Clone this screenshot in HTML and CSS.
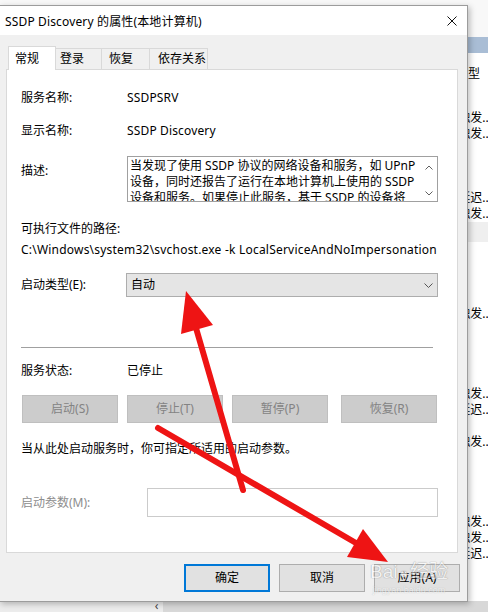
FILE: index.html
```html
<!DOCTYPE html>
<html lang="zh-CN">
<head>
    <meta charset="UTF-8">
    <meta name="viewport" content="width=device-width, initial-scale=1.0">
    <title>SSDP Discovery 的属性(本地计算机)</title>
    <link rel="stylesheet" href="styles.css">
</head>
<body>
    <div class="screen">
        <!-- services window behind the dialog -->
        <div class="desktop">
            <div class="bd-top"></div>
            <div class="bd-bar"></div>
            <div class="bd-head">启动类型</div>
            <div class="bd-list">
                <div class="bd-row">手动(触发...</div>
                <div class="bd-row">手动(触发...</div>
                <div class="bd-row"></div>
                <div class="bd-row"></div>
                <div class="bd-row"></div>
                <div class="bd-row">自动(延迟...</div>
                <div class="bd-row">手动(触发...</div>
                <div class="bd-row bd-band"></div>
                <div class="bd-row"></div>
                <div class="bd-row"></div>
                <div class="bd-row"></div>
                <div class="bd-row"></div>
                <div class="bd-row">手动(触发...</div>
                <div class="bd-row"></div>
                <div class="bd-row"></div>
                <div class="bd-row"></div>
                <div class="bd-row"></div>
                <div class="bd-row">手动(触发...</div>
                <div class="bd-row">自动(延迟...</div>
                <div class="bd-row"></div>
                <div class="bd-row">手动(触发...</div>
                <div class="bd-row"></div>
                <div class="bd-row"></div>
                <div class="bd-row"></div>
                <div class="bd-row"></div>
                <div class="bd-row">手动(触发...</div>
                <div class="bd-row">手动(触发...</div>
                <div class="bd-row">自动(延迟...</div>
            </div>
            <div class="bd-foot">
                <div class="bd-foot-left"></div>
                <div class="bd-foot-arrow">‹</div>
                <div class="bd-foot-track"></div>
            </div>
        </div>

        <div class="dialog">
            <div class="title-bar">
                <span class="title">SSDP Discovery 的属性(本地计算机)</span>
                <svg class="close" width="10" height="10" viewBox="0 0 10 10">
                    <path d="M0.5 0.5 L9.5 9.5 M9.5 0.5 L0.5 9.5" stroke="#111" stroke-width="1" fill="none"/>
                </svg>
            </div>

            <div class="dialog-body">
                <div class="tabs">
                    <div class="tab tab-active">常规</div>
                    <div class="tab tab-login">登录</div>
                    <div class="tab tab-recover">恢复</div>
                    <div class="tab tab-deps">依存关系</div>
                </div>

                <div class="tab-panel">
                    <div class="row">
                        <div class="label">服务名称:</div>
                        <div class="latin">SSDPSRV</div>
                    </div>
                    <div class="row row-gap">
                        <div class="label">显示名称:</div>
                        <div class="latin">SSDP Discovery</div>
                    </div>
                    <div class="row row-gap row-top">
                        <div class="label label-desc">描述:</div>
                        <div class="desc-box">
                            <div class="desc-text">
                                <div>当发现了使用 SSDP 协议的网络设备和服务，如 UPnP</div>
                                <div>设备，同时还报告了运行在本地计算机上使用的 SSDP</div>
                                <div>设备和服务。如果停止此服务，基于 SSDP 的设备将</div>
                            </div>
                            <div class="desc-scroll">
                                <svg width="8" height="5" viewBox="0 0 8 5"><path d="M0.5 4.5 L4 1 L7.5 4.5" stroke="#606060" fill="none"/></svg>
                                <svg width="8" height="5" viewBox="0 0 8 5"><path d="M0.5 0.5 L4 4 L7.5 0.5" stroke="#606060" fill="none"/></svg>
                            </div>
                        </div>
                    </div>

                    <div class="path-label">可执行文件的路径:</div>
                    <div class="path">C:\Windows\system32\svchost.exe -k LocalServiceAndNoImpersonation</div>

                    <div class="row startup-row">
                        <div class="label">启动类型(E):</div>
                        <div class="select">
                            <span>自动</span>
                            <svg width="9" height="5" viewBox="0 0 9 5"><path d="M0.5 0.5 L4.5 4.5 L8.5 0.5" stroke="#555" fill="none"/></svg>
                        </div>
                    </div>

                    <div class="separator"></div>

                    <div class="row status-row">
                        <div class="label">服务状态:</div>
                        <div>已停止</div>
                    </div>

                    <div class="service-buttons">
                        <button class="btn-disabled">启动(S)</button>
                        <button class="btn-disabled">停止(T)</button>
                        <button class="btn-disabled">暂停(P)</button>
                        <button class="btn-disabled btn-last">恢复(R)</button>
                    </div>

                    <div class="hint">当从此处启动服务时，你可指定所适用的启动参数。</div>

                    <div class="row param-row">
                        <div class="label label-param">启动参数(M):</div>
                        <div class="param-input"></div>
                    </div>
                </div>

                <div class="footer">
                    <button class="btn btn-default">确定</button>
                    <button class="btn">取消</button>
                    <button class="btn">应用(A)</button>
                </div>
            </div>
        </div>

        <!-- red annotation arrows drawn over the screenshot -->
        <svg class="annot" width="488" height="612" viewBox="0 0 488 612">
            <line x1="243" y1="490" x2="196" y2="328" stroke="#ee1414" stroke-width="6" stroke-linecap="round"/>
            <polygon points="186,291 213,325 181,334" fill="#ee1414"/>
            <line x1="158" y1="428" x2="356" y2="543" stroke="#ee1414" stroke-width="6" stroke-linecap="round"/>
            <polygon points="388,562 347,557 363,529" fill="#ee1414"/>
        </svg>

        <div class="watermark">
            <span class="wm-brand">Bai<span class="wm-paw">●</span>经验</span>
            <span class="wm-url">jingyan.baidu.com</span>
        </div>
    </div>
</body>
</html>
```

FILE: styles.css
```css
body {
    margin: 0;
    font-family: "Noto Sans", "Noto Sans CJK SC", sans-serif;
    font-size: 12px;
    line-height: 16px;
    color: #000;
    background-color: #fff;
}

.screen {
    position: relative;
    width: 488px;
    height: 612px;
    overflow: hidden;
}

/* background window */
.desktop {
    display: flex;
    flex-direction: column;
    height: 612px;
    background-color: #fff;
}

.bd-top {
    height: 37px;
    background-color: #f8f8f8;
}

.bd-bar {
    height: 16px;
    background-color: #a9bdd5;
}

.bd-head {
    margin-top: 13px;
    height: 16px;
    text-align: right;
    padding-right: 8px;
}

.bd-list {
    margin-top: 28px;
}

.bd-row {
    height: 16px;
    text-align: right;
    white-space: nowrap;
    margin-right: -4px;
}

.bd-band {
    height: 20px;
    background-color: #efefef;
}

.bd-foot {
    margin-top: auto;
    height: 11px;
    display: flex;
}

.bd-foot-left {
    width: 150px;
    background-color: #ececec;
}

.bd-foot-arrow {
    width: 13px;
    background-color: #ececec;
    color: #444;
    font-size: 12px;
    line-height: 10px;
    text-align: center;
}

.bd-foot-track {
    flex: 1;
    background-color: #d8d8d8;
}

/* dialog window */
.dialog {
    position: absolute;
    left: -1px;
    top: 5px;
    width: 469px;
    height: 597px;
    box-sizing: border-box;
    background-color: #f0f0f0;
    border: 1px solid #9c9c9c;
    box-shadow: 2px 2px 6px rgba(0, 0, 0, 0.25);
    display: flex;
    flex-direction: column;
}

.title-bar {
    height: 29px;
    background-color: #fff;
    display: flex;
    align-items: center;
    padding-left: 5px;
}

.title {
    flex: 1;
    padding-top: 3px;
    letter-spacing: 0.15px;
}

.close {
    margin-right: 10px;
}

.dialog-body {
    padding: 11px 7px 0 6px;
}

.tabs {
    display: flex;
    align-items: flex-end;
    height: 23px;
}

.tab {
    box-sizing: border-box;
    height: 21px;
    line-height: 20px;
    padding-left: 5px;
    border-top: 1px solid #d9d9d9;
    border-right: 1px solid #d9d9d9;
    background-color: #f0f0f0;
}

.tab-active {
    position: relative;
    z-index: 1;
    width: 48px;
    height: 24px;
    line-height: 23px;
    margin-left: 2px;
    margin-bottom: -1px;
    padding-left: 6px;
    border-left: 1px solid #d9d9d9;
    background-color: #fff;
}

.tab-login {
    width: 46px;
    padding-left: 4px;
}

.tab-recover {
    width: 48px;
    padding-left: 7px;
}

.tab-deps {
    width: 58px;
    padding-left: 8px;
}

.tab-panel {
    box-sizing: border-box;
    width: 452px;
    height: 484px;
    background-color: #fff;
    border: 1px solid #d9d9d9;
    padding: 20px 19px 0 14px;
}

.row {
    display: flex;
    align-items: center;
}

.row-gap {
    margin-top: 17px;
}

.row-top {
    align-items: flex-start;
}

.label {
    width: 106px;
    flex-shrink: 0;
}

.latin {
    letter-spacing: 0.15px;
}

.label-desc {
    padding-top: 7px;
}

.desc-box {
    box-sizing: border-box;
    width: 311px;
    height: 46px;
    border: 1px solid #a0a0a0;
    display: flex;
    overflow: hidden;
}

.desc-text {
    flex: 1;
    padding: 1px 0 0 2px;
    white-space: nowrap;
    overflow: hidden;
}

.desc-scroll {
    width: 17px;
    display: flex;
    flex-direction: column;
    align-items: center;
    justify-content: space-between;
    padding: 8px 0 5px;
}

.path-label {
    margin-top: 19px;
}

.path {
    margin-top: 5px;
    white-space: nowrap;
    letter-spacing: 0.21px;
}

.startup-row {
    margin-top: 15px;
}

.select {
    box-sizing: border-box;
    width: 312px;
    height: 24px;
    margin-left: -1px;
    background-color: #e5e5e5;
    border: 1px solid #adadad;
    display: flex;
    align-items: center;
    justify-content: space-between;
    padding: 0 4px 0 4px;
}

.separator {
    margin-top: 50px;
    margin-right: 5px;
    height: 1px;
    background-color: #a0a0a0;
}

.status-row {
    margin-top: 15px;
}

.service-buttons {
    margin-top: 16px;
    margin-left: 1px;
    display: flex;
    gap: 9px;
}

button {
    font-family: inherit;
    font-size: 12px;
    line-height: 16px;
    margin: 0;
    padding: 0;
}

.btn-disabled {
    width: 96px;
    height: 28px;
    background-color: #cccccc;
    border: 1px solid #bfbfbf;
    color: #838383;
}

.btn-last {
    margin-left: 4px;
}

.hint {
    margin-top: 18px;
}

.param-row {
    margin-top: 31px;
}

.label-param {
    width: 126px;
    color: #8d8d8d;
}

.param-input {
    box-sizing: border-box;
    width: 291px;
    height: 29px;
    border: 1px solid #cbcbcb;
    background-color: #fff;
}

.footer {
    margin-top: 11px;
    display: flex;
    justify-content: flex-end;
    gap: 9px;
}

.btn {
    box-sizing: border-box;
    width: 86px;
    height: 28px;
    background-color: #e1e1e1;
    border: 1px solid #adadad;
    color: #000;
}

.btn-default {
    border: 2px solid #0078d7;
}

/* annotation layer */
.annot {
    position: absolute;
    left: 0;
    top: 0;
    pointer-events: none;
}

.watermark {
    position: absolute;
    left: 370px;
    top: 560px;
    display: flex;
    flex-direction: column;
    align-items: center;
    opacity: 0.55;
    pointer-events: none;
}

.wm-brand {
    font-family: "Liberation Sans", "Noto Sans CJK SC", sans-serif;
    font-size: 19px;
    line-height: 24px;
    color: #fff;
    text-shadow: 0 0 1px #777, 0 0 1px #777;
}

.wm-paw {
    font-size: 14px;
    margin: 0 2px;
}

.wm-url {
    font-family: "Liberation Sans", sans-serif;
    font-size: 9px;
    line-height: 10px;
    color: #fff;
    text-shadow: 0 0 1px #888;
}
```
